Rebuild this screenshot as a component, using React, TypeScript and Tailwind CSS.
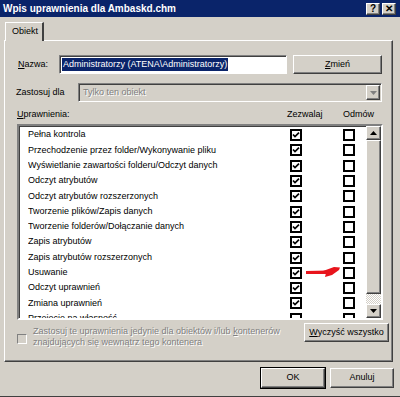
import React from "react";

const permissions = [
  "Pełna kontrola",
  "Przechodzenie przez folder/Wykonywanie pliku",
  "Wyświetlanie zawartości folderu/Odczyt danych",
  "Odczyt atrybutów",
  "Odczyt atrybutów rozszerzonych",
  "Tworzenie plików/Zapis danych",
  "Tworzenie folderów/Dołączanie danych",
  "Zapis atrybutów",
  "Zapis atrybutów rozszerzonych",
  "Usuwanie",
  "Odczyt uprawnień",
  "Zmiana uprawnień",
  "Przejęcie na własność",
];

const raised =
  "border border-t-white border-l-white border-r-[#404040] border-b-[#404040] shadow-[inset_-1px_-1px_#808080] bg-[#d4d0c8]";
const sunken =
  "border border-t-[#808080] border-l-[#808080] border-r-white border-b-white shadow-[inset_1px_1px_#404040]";

function Box({ checked }: { checked?: boolean }) {
  return (
    <span className="flex h-[12px] w-[12px] shrink-0 items-center justify-center border-2 border-black bg-white">
      {checked && (
        <svg width="8" height="8" viewBox="0 0 8 8">
          <polyline points="1,3.5 3,5.6 7,1.6" fill="none" stroke="#000" strokeWidth="1.7" />
        </svg>
      )}
    </span>
  );
}

function Button({ children, className = "" }: { children: React.ReactNode; className?: string }) {
  return (
    <div className={`flex items-center justify-center text-[9px] text-black ${raised} ${className}`}>
      {children}
    </div>
  );
}

export default function App() {
  return (
    <div className="relative h-[397px] w-[400px] overflow-hidden border-b border-[#404040] bg-[#d4d0c8] font-['Liberation_Sans',Arial,sans-serif] text-[9px] text-black">
      {/* title bar */}
      <div className="flex h-[17px] items-center justify-between bg-[#0a246a] pl-[3px] pr-[4px]">
        <span className="text-[10px] font-bold text-white">Wpis uprawnienia dla Ambaskd.chm</span>
        <div className="flex gap-[2px]">
          <div className={`flex h-[12px] w-[14px] items-center justify-center text-[10px] font-bold leading-none ${raised}`}>?</div>
          <div className={`flex h-[12px] w-[14px] items-center justify-center text-[10px] font-bold leading-none ${raised}`}>✕</div>
        </div>
      </div>

      {/* tab */}
      <div className="relative z-10 -mb-[1px] mt-[5px] flex">
        <div className="ml-[5px] flex h-[19px] w-[39px] items-center border-l border-t border-r-2 border-l-white border-t-white border-r-[#404040] bg-[#d4d0c8] pl-[6px] text-[9px]">
          Obiekt
        </div>
      </div>

      {/* panel */}
      <div className="ml-[4px] h-[322px] w-[389px] border border-l-white border-t-white border-r-[#404040] border-b-[#404040] shadow-[inset_-1px_-1px_#808080]">
        {/* Nazwa */}
        <div className="mt-[14px] flex h-[19px] items-center">
          <span className="ml-[13px] w-[41px]">
            <span className="underline">N</span>azwa:
          </span>
          <div className={`flex h-[19px] w-[228px] items-center bg-white pl-[2px] ${sunken}`}>
            <span className="bg-[#0a246a] px-[1px] leading-[13px] text-white">
              Administratorzy (ATENA\Administratorzy)
            </span>
          </div>
          <Button className="ml-[6px] h-[19px] w-[89px]">
            <span className="underline">Z</span>mień
          </Button>
        </div>

        {/* Zastosuj dla */}
        <div className="mt-[9px] flex h-[19px] items-center">
          <span className="ml-[11px] w-[62px]">Zastosuj dla</span>
          <div className={`flex h-[19px] w-[304px] items-center justify-between pl-[4px] pr-[1px] ${sunken}`}>
            <span className="text-[#808080] [text-shadow:1px_1px_#fff]">Tylko ten obiekt</span>
            <div className={`flex h-[15px] w-[14px] items-center justify-center ${raised}`}>
              <svg width="7" height="4" viewBox="0 0 7 4">
                <polygon points="0,0 7,0 3.5,4" fill="#808080" />
              </svg>
            </div>
          </div>
        </div>

        {/* headers */}
        <div className="mt-[6px] flex h-[14px] items-center">
          <span className="ml-[12px] w-[270px]">
            <span className="underline">U</span>prawnienia:
          </span>
          <span className="w-[56px]">Zezwalaj</span>
          <span>Odmów</span>
        </div>

        {/* list */}
        <div className={`relative ml-[12px] mt-[2px] flex h-[196px] w-[366px] border-2 bg-white ${sunken}`}>
          <div className="flex-1 overflow-hidden pt-[1.5px]">
            {permissions.map((p, i) => (
              <div key={p} className="flex h-[15.3px] items-center pl-[9px]">
                <span className="w-[262px] truncate">{p}</span>
                <Box checked={i < 12} />
                <span className="w-[41px]" />
                <Box />
              </div>
            ))}
          </div>
          <div className="flex w-[15px] flex-col">
            <div className={`flex h-[14px] items-center justify-center ${raised}`}>
              <svg width="7" height="4" viewBox="0 0 7 4">
                <polygon points="3.5,0 7,4 0,4" fill="#000" />
              </svg>
            </div>
            <div className={`flex-1 ${raised}`} />
            <div className="h-[10px] bg-[repeating-conic-gradient(#fff_0%_25%,#d4d0c8_0%_50%)] bg-size-[2px_2px]" />
            <div className={`flex h-[14px] items-center justify-center ${raised}`}>
              <svg width="7" height="4" viewBox="0 0 7 4">
                <polygon points="0,0 7,0 3.5,4" fill="#000" />
              </svg>
            </div>
          </div>
          {/* red arrow annotation */}
          <svg className="absolute left-[285px] top-[140px]" width="40" height="14" viewBox="0 0 40 14">
            <polygon points="2,5 24,4.6 23,8 2,8" fill="#e8141c" />
            <polygon points="19,5 30,1 36,1.5 35,4 28,9 21,11 22,7" fill="#e8141c" />
          </svg>
        </div>

        {/* bottom options */}
        <div className="flex items-start">
          <div className="ml-[12px] mt-[6px] flex items-start gap-[6px]">
            <span className="mt-[8px] h-[10px] w-[10px] shrink-0 border border-t-[#808080] border-l-[#808080] border-r-white border-b-white bg-[#d4d0c8]" />
            <span className="w-[258px] leading-[10.5px] text-[#808080] [text-shadow:1px_1px_#fff]">
              Zastosuj te uprawnienia jedynie dla obiektów i/lub <span className="underline">k</span>ontenerów
              znajdujących się wewnątrz tego kontenera
            </span>
          </div>
          <Button className="ml-auto mr-[3px] mt-[3px] h-[19px] w-[85px]">
            <span className="underline">W</span>yczyść wszystko
          </Button>
        </div>
      </div>

      {/* footer */}
      <div className="mt-[6px] flex justify-end gap-[5px] pr-[6px]">
        <Button className="h-[20px] w-[64px] outline outline-1 outline-black">OK</Button>
        <Button className="h-[20px] w-[64px]">Anuluj</Button>
      </div>
    </div>
  );
}
